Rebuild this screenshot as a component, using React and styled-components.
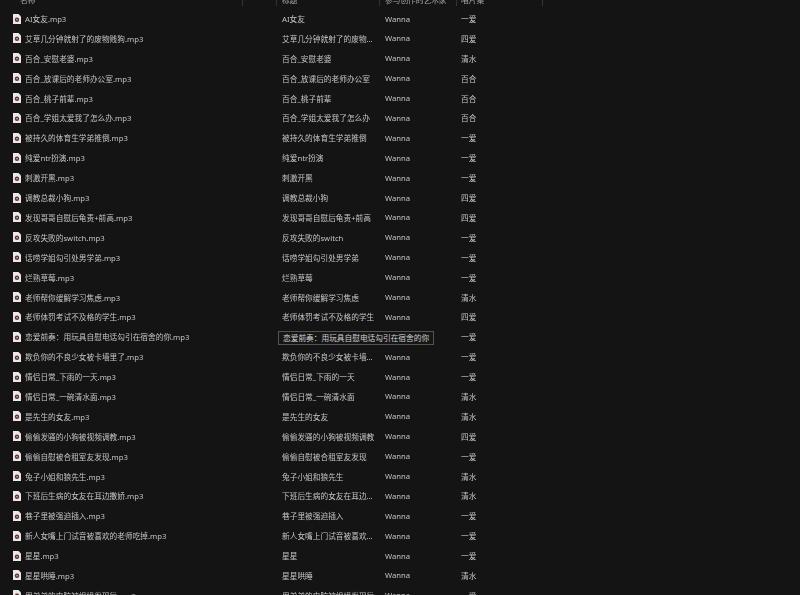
import React from "react";
import styled, { createGlobalStyle } from "styled-components";

const GRID = "243px 34px 103px 77px 86px 1fr";

const tracks = [
  ["AI女友.mp3", "AI女友", "一爱"],
  ["艾草几分钟就射了的废物贱狗.mp3", "艾草几分钟就射了的废物贱狗", "四爱"],
  ["百合_安慰老婆.mp3", "百合_安慰老婆", "清水"],
  ["百合_放课后的老师办公室.mp3", "百合_放课后的老师办公室", "百合"],
  ["百合_桃子前辈.mp3", "百合_桃子前辈", "百合"],
  ["百合_学姐太爱我了怎么办.mp3", "百合_学姐太爱我了怎么办", "百合"],
  ["被持久的体育生学弟推倒.mp3", "被持久的体育生学弟推倒", "一爱"],
  ["纯爱ntr扮演.mp3", "纯爱ntr扮演", "一爱"],
  ["刺激开黑.mp3", "刺激开黑", "一爱"],
  ["调教总裁小狗.mp3", "调教总裁小狗", "四爱"],
  ["发现哥哥自慰后龟责+前高.mp3", "发现哥哥自慰后龟责+前高", "四爱"],
  ["反攻失败的switch.mp3", "反攻失败的switch", "一爱"],
  ["话唠学姐勾引处男学弟.mp3", "话唠学姐勾引处男学弟", "一爱"],
  ["烂熟草莓.mp3", "烂熟草莓", "一爱"],
  ["老师帮你缓解学习焦虑.mp3", "老师帮你缓解学习焦虑", "清水"],
  ["老师体罚考试不及格的学生.mp3", "老师体罚考试不及格的学生", "四爱"],
  ["恋爱前奏：用玩具自慰电话勾引在宿舍的你.mp3", "恋爱前奏：用玩具自慰电话勾引在宿舍的你", "一爱", true],
  ["欺负你的不良少女被卡墙里了.mp3", "欺负你的不良少女被卡墙里了", "一爱"],
  ["情侣日常_下雨的一天.mp3", "情侣日常_下雨的一天", "一爱"],
  ["情侣日常_一碗清水面.mp3", "情侣日常_一碗清水面", "清水"],
  ["是先生的女友.mp3", "是先生的女友", "清水"],
  ["偷偷发骚的小狗被视频调教.mp3", "偷偷发骚的小狗被视频调教", "四爱"],
  ["偷偷自慰被合租室友发现.mp3", "偷偷自慰被合租室友发现", "一爱"],
  ["兔子小姐和狼先生.mp3", "兔子小姐和狼先生", "清水"],
  ["下班后生病的女友在耳边撒娇.mp3", "下班后生病的女友在耳边撒娇", "清水"],
  ["巷子里被强迫插入.mp3", "巷子里被强迫插入", "一爱"],
  ["新人女嘴上门试音被喜欢的老师吃掉.mp3", "新人女嘴上门试音被喜欢的老师吃掉", "一爱"],
  ["星星.mp3", "星星", "一爱"],
  ["星星哄睡.mp3", "星星哄睡", "清水"],
  ["用弟弟的电脑被姐姐发现后.mp3", "用弟弟的电脑被姐姐发现后", "一爱"],
];

const GlobalStyle = createGlobalStyle`
  html, body {
    margin: 0;
    height: 100%;
    overflow: hidden;
    background: #141414;
  }
`;

const Page = styled.div`
  width: 800px;
  height: 595px;
  overflow: hidden;
  color: #c4c4c4;
  font-family: "Noto Sans", "Noto Sans CJK SC", sans-serif;
  font-size: 7.7px;
  filter: blur(0.4px);
`;

const HeaderRow = styled.div`
  display: grid;
  grid-template-columns: ${GRID};
  height: 8.6px;
  overflow: hidden;
`;

const HeaderCell = styled.div`
  height: 6px;
  padding-left: ${({ $indent }) => $indent}px;
  border-right: 1px solid #333333;
  box-sizing: border-box;
  line-height: 0;
  color: #a8a8a8;
  white-space: nowrap;
  overflow: hidden;
`;

const Row = styled.div`
  display: grid;
  grid-template-columns: ${GRID};
  height: 19.9px;
  align-items: center;
`;

const NameCell = styled.div`
  display: flex;
  align-items: center;
  gap: 4px;
  padding-left: 13px;
  white-space: nowrap;
  grid-column: 1 / 3;
`;

const TitleCell = styled.div`
  position: relative;
  padding-left: 5px;
`;

const TitleText = styled.div`
  width: 93px;
  white-space: nowrap;
  overflow: hidden;
  text-overflow: ellipsis;
`;

const TitleEditor = styled.div`
  position: absolute;
  z-index: 2;
  left: 1px;
  top: -6px;
  height: 14px;
  line-height: 12px;
  padding: 0 4px;
  box-sizing: border-box;
  border: 1px solid #525252;
  background: #161616;
  color: #d0d0d0;
  white-space: nowrap;
`;

const PlainCell = styled.div`
  grid-column: ${({ $column }) => $column};
  padding-left: ${({ $indent }) => $indent}px;
`;

const FileIcon = () => (
  <svg width="8" height="10" viewBox="0 0 8 10">
    <path d="M0 0h5.5L8 2.5V10H0z" fill="#ebe7e7" />
    <circle cx="4" cy="5.8" r="2.2" fill="#5a3434" />
    <circle cx="4" cy="5.8" r="0.8" fill="#dccfcf" />
  </svg>
);

export default function App() {
  return (
    <Page>
      <GlobalStyle />
      <HeaderRow>
        <HeaderCell $indent={20}>名称</HeaderCell>
        <HeaderCell />
        <HeaderCell $indent={5}>标题</HeaderCell>
        <HeaderCell $indent={5}>参与创作的艺术家</HeaderCell>
        <HeaderCell $indent={4}>唱片集</HeaderCell>
      </HeaderRow>
      {tracks.map(([file, title, album, editing]) => (
        <Row key={file}>
          <NameCell>
            <FileIcon />
            {file}
          </NameCell>
          <TitleCell>
            {editing ? <TitleEditor>{title}</TitleEditor> : <TitleText>{title}</TitleText>}
          </TitleCell>
          {!editing && <PlainCell $column={4} $indent={5}>Wanna</PlainCell>}
          <PlainCell $column={5} $indent={4}>{album}</PlainCell>
        </Row>
      ))}
    </Page>
  );
}
